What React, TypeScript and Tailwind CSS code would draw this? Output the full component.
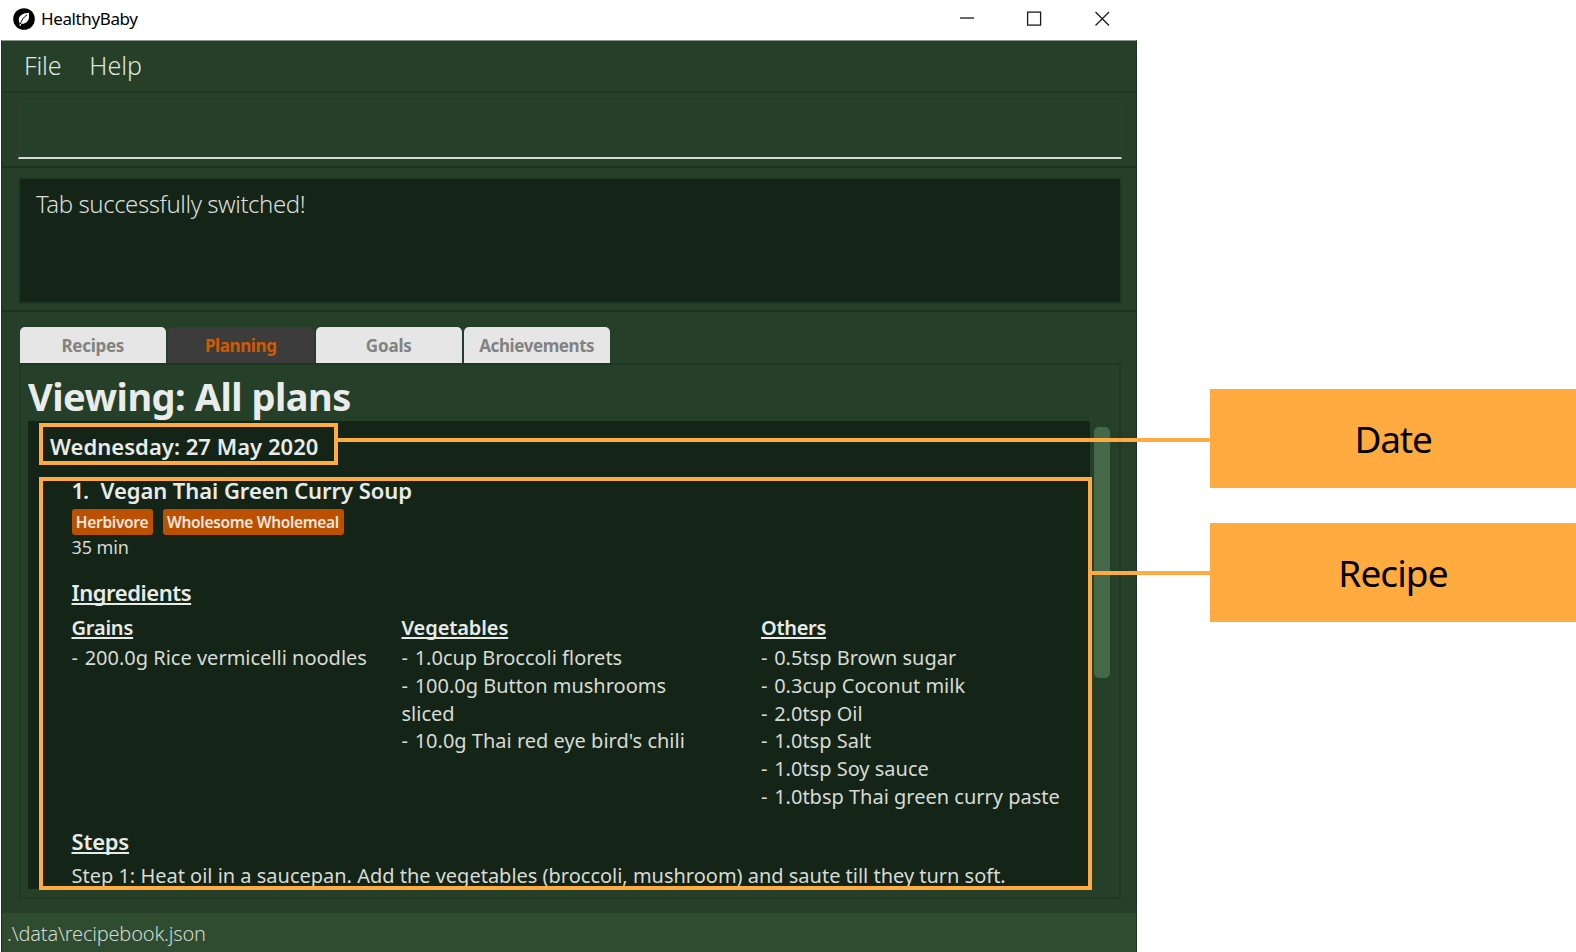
const TABS = [
  { label: "Recipes", active: false, tracking: "tracking-[-0.3px]" },
  { label: "Planning", active: true, tracking: "tracking-[-0.4px]" },
  { label: "Goals", active: false, tracking: "tracking-[-0.15px]" },
  { label: "Achievements", active: false, tracking: "tracking-[-0.42px]" },
];

const INGREDIENTS = [
  { name: "Grains", tracking: "tracking-[-0.2px]", items: ["200.0g Rice vermicelli noodles"] },
  {
    name: "Vegetables",
    tracking: "tracking-[-0.1px]",
    items: ["1.0cup Broccoli florets", "100.0g Button mushrooms sliced", "10.0g Thai red eye bird's chili"],
  },
  {
    name: "Others",
    tracking: "tracking-[-0.3px]",
    items: [
      "0.5tsp Brown sugar",
      "0.3cup Coconut milk",
      "2.0tsp Oil",
      "1.0tsp Salt",
      "1.0tsp Soy sauce",
      "1.0tbsp Thai green curry paste",
    ],
  },
];

function TitleBar() {
  return (
    <header className="flex h-10 shrink-0 items-center bg-white">
      <svg className="mb-[2px] ml-3 size-[22px]" viewBox="0 0 22 22">
        <circle cx="11" cy="11" r="10.8" fill="#000" />
        <path d="M16.2 4.8C11 5 6 7 5.8 11.5c-.1 1.7.3 2.7 1 3.6L6.4 17.6l1.2.3.7-2.100c4.200.4 7.300-2.600 7.700-6 .2-1.800-.2-3.500.2-5z" fill="#fff" />
        <path d="M14 6.8C10.8 9 8.6 12 7.3 16.2" fill="none" stroke="#000" strokeWidth="1" />
      </svg>
      <span className="mb-[2px] ml-[6px] text-[17px] leading-[38px] tracking-[-0.38px] text-black">HealthyBaby</span>
      <svg className="ml-auto h-10 w-[180px]" viewBox="0 0 180 40" fill="none" stroke="#1a1a1a" strokeWidth="1.3">
        <path d="M3 18H17" />
        <rect x="70.6" y="12.1" width="13" height="13" />
        <path d="M138.5 12L152 25.5M152 12L138.5 25.5" />
      </svg>
    </header>
  );
}

function Recipe() {
  return (
    <article className="pl-[43.5px]">
      <h3 className="mt-[14px] flex h-[30px] items-center text-[22px] leading-[30px] font-semibold text-[#e8ebe8]">
        <span className="w-[29px] tracking-[-1px]">1.</span>
        <span className="tracking-[-0.06px]">Vegan Thai Green Curry Soup</span>
      </h3>
      <div className="mt-1 flex h-[26px] gap-[10px] text-[15.5px] leading-[20px] font-semibold text-[#f1e6df]">
        <span className="flex w-[81px] justify-center rounded-[3px] bg-[#bb5000] pt-[3px] tracking-[-0.3px]">Herbivore</span>
        <span className="flex w-[181px] justify-center rounded-[3px] bg-[#bb5000] pt-[3px] tracking-[-0.32px] whitespace-nowrap">
          Wholesome Wholemeal
        </span>
      </div>
      <p className="h-6 text-[18px] leading-6 tracking-[-0.1px]">35 min</p>
      <h4 className="mt-[18px] text-[22px] leading-[30px] font-semibold tracking-[-0.45px] text-[#e8ebe8] underline decoration-[1.5px] underline-offset-[2px] [text-decoration-skip-ink:none]">
        Ingredients
      </h4>
      <div className="mt-[7px] grid h-[197px] grid-cols-[330px_359.5px_320px]">
        {INGREDIENTS.map((group) => (
          <section key={group.name}>
            <h5
              className={`mb-[2px] text-[20px] leading-7 font-semibold text-[#e8ebe8] underline decoration-[1.5px] underline-offset-[2px] [text-decoration-skip-ink:none] ${group.tracking}`}
            >
              {group.name}
            </h5>
            <ul className="w-[300px] text-[20px] leading-[27.8px]">
              {group.items.map((item) => (
                <li key={item}>
                  <span className="mr-[1.5px]">- </span>
                  {item}
                </li>
              ))}
            </ul>
          </section>
        ))}
      </div>
      <h4 className="mt-[15px] text-[22px] leading-[30px] font-semibold tracking-[-0.2px] text-[#e8ebe8] underline decoration-[1.5px] underline-offset-[2px] [text-decoration-skip-ink:none]">
        Steps
      </h4>
      <p className="mt-[6px] text-[20px] leading-7 tracking-[-0.01px] whitespace-nowrap">
        Step 1: Heat oil in a saucepan. Add the vegetables (broccoli, mushroom) and saute till they turn soft.
      </p>
    </article>
  );
}

function PlanningTab() {
  return (
    <section className="mx-[17px] flex h-[536px] w-[1102px] flex-col border-2 border-[#1f3822] pl-[7px]">
      <h1 className="h-14 text-[38px] leading-[62px] font-bold tracking-[-0.5px] text-[#eaecea]">Viewing: All plans</h1>
      <div className="flex">
        <div className="h-[468px] w-[1062px] overflow-hidden bg-[#142417] text-[#d6dbd6]">
          <h2 className="mt-[10px] pl-[22px] text-[22px] leading-[30px] font-semibold tracking-[0.03px] text-[#e8ebe8]">
            Wednesday: 27 May 2020
          </h2>
          <Recipe />
        </div>
        <div className="mt-[6px] ml-1 h-[251px] w-4 rounded-[5px] bg-[#456848]" />
      </div>
    </section>
  );
}

function Annotations() {
  return (
    <div className="pointer-events-none absolute inset-0">
      <div className="absolute top-[423px] left-[39px] h-[42px] w-[299px] border-4 border-[#ffab40]" />
      <div className="absolute top-[438px] left-[338px] h-1 w-[872px] bg-[#ffab40]" />
      <div className="absolute top-[477px] left-[39px] h-[413px] w-[1053px] border-4 border-[#ffab40]" />
      <div className="absolute top-[571px] left-[1092px] h-1 w-[118px] bg-[#ffab40]" />
      <div className="absolute top-[389px] left-[1210px] flex h-[99px] w-[366px] items-center justify-center bg-[#ffab40] text-[37px] tracking-[-1.2px] text-black">
        Date
      </div>
      <div className="absolute top-[523px] left-[1210px] flex h-[99px] w-[366px] items-center justify-center bg-[#ffab40] text-[37px] tracking-[-0.9px] text-black">
        Recipe
      </div>
    </div>
  );
}

export default function App() {
  return (
    <main className="relative h-[952px] w-[1576px] overflow-hidden bg-white font-['Noto_Sans','Open_Sans',sans-serif]">
      <div className="flex h-[952px] w-[1137px] flex-col pl-px">
        <TitleBar />
        <div className="flex min-h-0 grow flex-col border-x border-t border-x-[#1c331f] border-t-[#8b9b8d] bg-[#263f28]">
          <nav className="flex h-[50px] gap-[28px] pl-[22px] text-[25px] leading-[48px] font-light text-[#dfe5df]">
            <span className="tracking-[-0.2px]">File</span>
            <span>Help</span>
          </nav>
          <div className="h-[75px] border-t-2 border-[#1f3822] pt-2 pr-[14px] pl-4">
            <div className="h-[58px] border border-b-2 border-[#353d35] border-b-[#d5dcd5]" />
          </div>
          <div className="h-[146px] border-y-2 border-t-[#1c331f] border-b-[#1c331f] pt-[9px] pr-[14px] pl-4">
            <div className="h-[127px] border-2 border-[#203924] bg-[#142417] pt-2 pl-4 text-[24px] leading-[34px] font-light tracking-[-0.45px] text-[#d9ded9]">
              Tab successfully switched!
            </div>
          </div>
          <div className="mt-[15px] flex h-9 gap-[2.5px] pl-[18px]">
            {TABS.map((tab) => (
              <button
                key={tab.label}
                className={`w-[145.5px] rounded-t-[5px] text-center text-[17px] leading-[38px] font-bold ${tab.tracking} ${
                  tab.active ? "bg-[#3c3c3c] text-[#d15a00]" : "bg-[#e6e6e6] text-[#828282]"
                }`}
              >
                {tab.label}
              </button>
            ))}
          </div>
          <PlanningTab />
          <footer className="mt-auto h-[39px] bg-[#2f4c31] pl-[5px] text-[20px] leading-[42px] font-light tracking-[-0.18px] text-[#cfd8cf]">
            .\data\recipebook.json
          </footer>
        </div>
      </div>
      <Annotations />
    </main>
  );
}
